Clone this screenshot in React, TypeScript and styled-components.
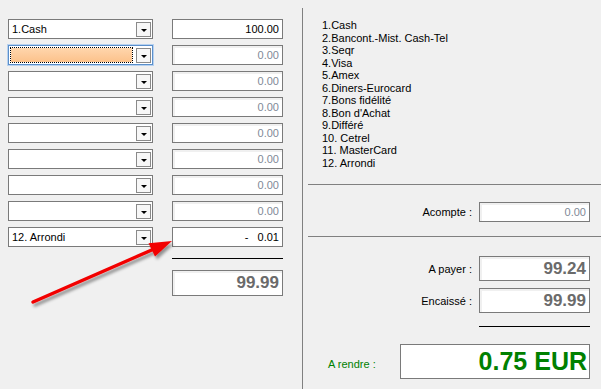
import React from 'react';
import styled, { createGlobalStyle, css } from 'styled-components';

const GlobalStyle = createGlobalStyle`
  html, body {
    margin: 0;
    padding: 0;
    background: #f0f0f0;
  }
  body {
    font-family: "Liberation Sans", Arial, sans-serif;
    font-size: 11px;
    color: #000;
  }
`;

const paymentTypes = [
  '1.Cash',
  '2.Bancont.-Mist. Cash-Tel',
  '3.Seqr',
  '4.Visa',
  '5.Amex',
  '6.Diners-Eurocard',
  '7.Bons fidélité',
  "8.Bon d'Achat",
  '9.Différé',
  '10. Cetrel',
  '11. MasterCard',
  '12. Arrondi',
];

type Entry = { method: string; amount: string; tone: 'normal' | 'muted'; focused?: boolean };

const entries: Entry[] = [
  { method: '1.Cash', amount: '100.00', tone: 'normal' },
  { method: '', amount: '0.00', tone: 'muted', focused: true },
  { method: '', amount: '0.00', tone: 'muted' },
  { method: '', amount: '0.00', tone: 'muted' },
  { method: '', amount: '0.00', tone: 'muted' },
  { method: '', amount: '0.00', tone: 'muted' },
  { method: '', amount: '0.00', tone: 'muted' },
  { method: '', amount: '0.00', tone: 'muted' },
  { method: '12. Arrondi', amount: '-   0.01', tone: 'normal' },
];

export default function App() {
  return (
    <>
      <GlobalStyle />
      <Window>
        <LeftPane>
          <EntryGrid>
            {entries.map((e, idx) => (
              <React.Fragment key={idx}>
                <Combo $focused={e.focused}>
                  <ComboText $focused={e.focused}>{e.method}</ComboText>
                  <DropButton />
                </Combo>
                <AmountBox $tone={e.tone} $inset={e.tone === 'muted'}>
                  {e.amount}
                </AmountBox>
              </React.Fragment>
            ))}
          </EntryGrid>
          <SumColumn>
            <SumRule />
            <AmountBox $tone="total" $inset $height={26}>
              99.99
            </AmountBox>
          </SumColumn>
        </LeftPane>

        <RightPane>
          <TypeList>
            {paymentTypes.map((t) => (
              <li key={t}>{t}</li>
            ))}
          </TypeList>
          <Divider $top={15} />
          <FieldRow $top={17}>
            <FieldLabel>Acompte :</FieldLabel>
            <AmountBox $tone="muted" $inset $width={111}>
              0.00
            </AmountBox>
          </FieldRow>
          <Divider $top={14} />
          <FieldRow $top={19} $height={25}>
            <FieldLabel>A payer :</FieldLabel>
            <AmountBox $tone="total" $inset $width={111}>
              99.24
            </AmountBox>
          </FieldRow>
          <FieldRow $top={7} $height={25}>
            <FieldLabel>Encaissé :</FieldLabel>
            <AmountBox $tone="total" $inset $width={111}>
              99.99
            </AmountBox>
          </FieldRow>
          <ShortRule />
          <ChangeRow>
            <ChangeLabel>A rendre :</ChangeLabel>
            <ChangeBox>0.75 EUR</ChangeBox>
          </ChangeRow>
        </RightPane>

        <ArrowLayer width="601" height="389" viewBox="0 0 601 389">
          <defs>
            <filter id="arrowShadow" x="-20%" y="-20%" width="140%" height="160%">
              <feDropShadow dx="2" dy="3" stdDeviation="1.4" floodColor="#000" floodOpacity="0.4" />
            </filter>
          </defs>
          <g filter="url(#arrowShadow)">
            <line x1="33" y1="302" x2="154" y2="249" stroke="#f20000" strokeWidth="3.5" strokeLinecap="round" />
            <polygon points="172,241 148.5,243.2 155,256.6" fill="#f20000" />
          </g>
        </ArrowLayer>
      </Window>
    </>
  );
}

const Window = styled.div`
  position: relative;
  display: flex;
  width: 601px;
  height: 389px;
  overflow: hidden;
  background: #f0f0f0;
`;

const LeftPane = styled.div`
  flex: none;
  width: 302px;
  box-sizing: border-box;
  padding: 19px 0 0 8px;
`;

const EntryGrid = styled.div`
  display: grid;
  grid-template-columns: 145px 111px;
  grid-auto-rows: 20px;
  column-gap: 19px;
  row-gap: 6px;
`;

const Combo = styled.div<{ $focused?: boolean }>`
  box-sizing: border-box;
  display: flex;
  align-items: center;
  gap: 4px;
  padding: 0 1px 0 2px;
  background: #fff;
  border: 1px solid #7a7a7a;
  ${(p) =>
    p.$focused &&
    css`
      border-color: #5a8fcb;
      box-shadow: 0 0 0 1px #b7d1ef;
    `}
`;

const ComboText = styled.div<{ $focused?: boolean }>`
  flex: 1;
  box-sizing: border-box;
  height: 14px;
  line-height: 14px;
  padding-left: 1px;
  white-space: nowrap;
  overflow: hidden;
  ${(p) =>
    p.$focused &&
    css`
      background: linear-gradient(#ffd6ad, #fcc28b);
      outline: 1px dotted #000;
    `}
`;

const DropButton = styled.div`
  flex: none;
  position: relative;
  box-sizing: border-box;
  width: 15px;
  height: 15px;
  border: 1px solid #8a8a8a;
  background: #f7f7f7;

  &::after {
    content: '';
    position: absolute;
    left: 4px;
    top: 6px;
    border-left: 3px solid transparent;
    border-right: 3px solid transparent;
    border-top: 3px solid #000;
  }
`;

const toneStyles = {
  normal: css`
    color: #000;
    font-size: 11px;
  `,
  muted: css`
    color: #7f8a98;
    font-size: 11px;
  `,
  total: css`
    color: #6b6b6b;
    font-size: 17px;
    font-weight: bold;
  `,
};

const AmountBox = styled.div<{
  $tone: 'normal' | 'muted' | 'total';
  $inset?: boolean;
  $height?: number;
  $width?: number;
}>`
  box-sizing: border-box;
  display: flex;
  align-items: center;
  justify-content: flex-end;
  ${(p) => p.$width && `width: ${p.$width}px;`}
  ${(p) => p.$height && `height: ${p.$height}px;`}
  padding-right: 3px;
  background: #fff;
  border: 1px solid #7a7a7a;
  white-space: pre;
  ${(p) => p.$inset && 'box-shadow: inset 2px 2px 0 #f0f0f0;'}
  ${(p) => toneStyles[p.$tone]}
`;

const SumColumn = styled.div`
  display: flex;
  flex-direction: column;
  width: 111px;
  margin-left: 164px;
`;

const SumRule = styled.div`
  height: 1px;
  margin: 11px 0;
  background: #000;
`;

const RightPane = styled.div`
  flex: 1;
  display: flex;
  flex-direction: column;
  margin-top: 8px;
  padding-left: 5px;
  border-left: 1px solid #808080;
`;

const TypeList = styled.ul`
  margin: 0;
  padding: 11px 0 0 14px;
  list-style: none;
  line-height: 12.5px;
`;

const Divider = styled.div<{ $top: number }>`
  height: 1px;
  margin-top: ${(p) => p.$top}px;
  background: #808080;
`;

const FieldRow = styled.div<{ $top: number; $height?: number }>`
  display: flex;
  justify-content: flex-end;
  align-items: stretch;
  gap: 7px;
  height: ${(p) => p.$height ?? 20}px;
  margin-top: ${(p) => p.$top}px;
  padding-right: 11px;
`;

const FieldLabel = styled.span`
  align-self: center;
`;

const ShortRule = styled.div`
  align-self: flex-end;
  width: 111px;
  height: 1px;
  margin: 13px 11px 0 0;
  background: #000;
`;

const ChangeRow = styled.div`
  display: flex;
  justify-content: space-between;
  align-items: flex-start;
  margin-top: 17px;
  padding: 0 11px 0 20px;
`;

const ChangeLabel = styled.span`
  margin-top: 14px;
  color: #008000;
`;

const ChangeBox = styled.div`
  box-sizing: border-box;
  display: flex;
  align-items: center;
  justify-content: flex-end;
  width: 190px;
  height: 35px;
  padding-right: 2px;
  background: #fff;
  border: 1px solid #7a7a7a;
  color: #008000;
  font-size: 25px;
  font-weight: bold;
`;

const ArrowLayer = styled.svg`
  position: absolute;
  left: 0;
  top: 0;
  pointer-events: none;
`;
